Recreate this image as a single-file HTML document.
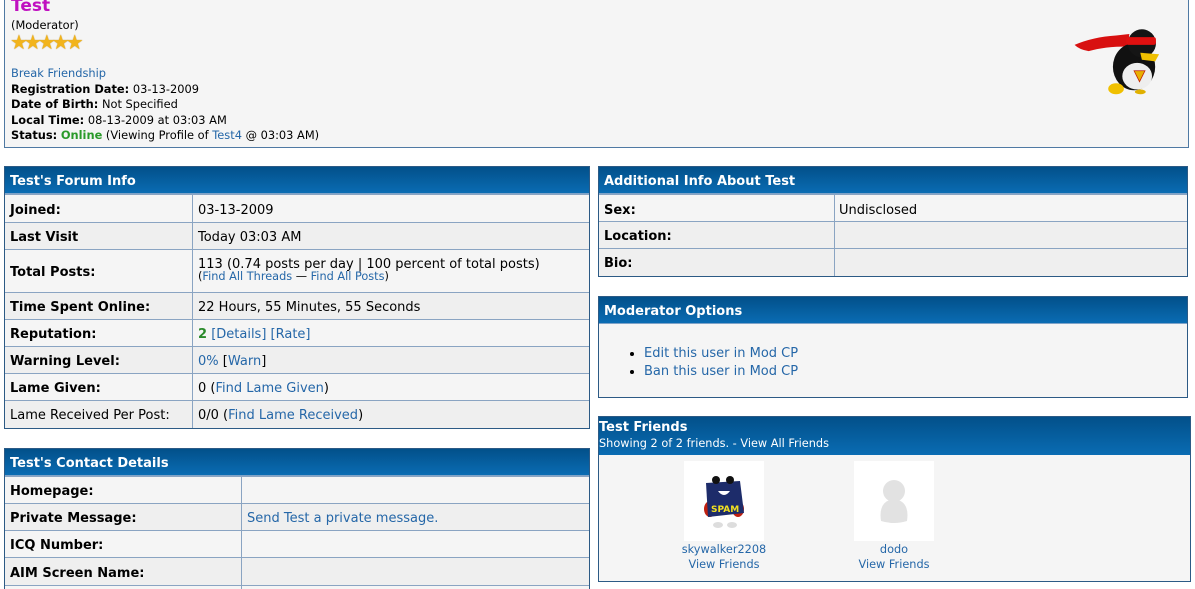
<!DOCTYPE html>
<html><head><meta charset="utf-8">
<style>
*{margin:0;padding:0;box-sizing:border-box}
html,body{width:1195px;height:589px;overflow:hidden}
body{background:#fff;font-family:"DejaVu Sans","Liberation Sans",sans-serif;color:#000;position:relative}
a{color:#2567a8;text-decoration:none}
.box{position:absolute;border:1px solid #2c5a85;background:#f5f5f5;overflow:hidden}
.hd{position:absolute;left:0;right:0;top:0;height:27px;background:linear-gradient(#02508a,#0a6cb3);color:#fff;font-weight:bold;font-size:13px;padding:7px 0 0 5px;border-bottom:1px solid #7fa3c8}
.row{position:absolute;left:0;right:0;border-top:1px solid #8aa4c2;font-size:13px}
.row.a{background:#f5f5f5}.row.b{background:#efefef}
.row .l{position:absolute;left:5px;font-weight:bold}
.row .v{position:absolute}
.div{position:absolute;top:27px;bottom:0;width:1px;background:#8aa4c2}
.top{font-size:11.4px;line-height:15.5px}
</style></head><body>

<div class="box" style="left:4px;top:-2px;width:1185px;height:150px;border-color:#4f79a3">
  <div style="position:absolute;left:6px;top:-3px;font-size:17px;font-weight:bold;color:#c010c0">Test</div>
  <div class="top" style="position:absolute;left:6px;top:19px">(Moderator)</div>
  <div style="position:absolute;left:5px;top:31px;font-size:20px;letter-spacing:-4px;color:#f2b41c;text-shadow:0 0 1px #b07a00">★★★★★</div>
  <div class="top" style="position:absolute;left:6px;top:67px">
    <a>Break Friendship</a><br>
    <b>Registration Date:</b> 03-13-2009<br>
    <b>Date of Birth:</b> Not Specified<br>
    <b>Local Time:</b> 08-13-2009 at 03:03 AM<br>
    <b>Status:</b> <b style="color:#2a9a2a">Online</b> (Viewing Profile of <a>Test4</a> @ 03:03 AM)
  </div>
  <svg style="position:absolute;left:1068px;top:20px" width="90" height="80" viewBox="0 0 115 100">
    <path d="M2 32 Q25 22 55 20 L72 18 L70 34 Q40 34 20 40 Q8 38 2 32Z" fill="#d81010"/>
    <ellipse cx="78" cy="60" rx="27" ry="30" fill="#111"/>
    <ellipse cx="82" cy="72" rx="19" ry="17" fill="#eee"/>
    <ellipse cx="88" cy="30" rx="18" ry="18" fill="#151515"/>
    <rect x="68" y="22" width="38" height="10" rx="3" fill="#e01010"/>
    <path d="M86 42 L110 44 L105 53 L88 51Z" fill="#f0c000"/>
    <path d="M78 65 L92 65 L85 79Z" fill="#e8b000" stroke="#c02000"/>
    <ellipse cx="55" cy="88" rx="10" ry="7" fill="#f0c000"/>
    <ellipse cx="86" cy="92" rx="7" ry="3" fill="#e0b000"/>
  </svg>
</div>

<!-- Forum info -->
<div class="box" style="left:4px;top:166px;width:586px;height:263px">
  <div class="hd">Test's Forum Info</div>
  <div class="row a" style="top:27px;height:28px"><span class="l" style="top:8px">Joined:</span><span class="v" style="left:193px;top:8px">03-13-2009</span></div>
  <div class="row b" style="top:55px;height:27px"><span class="l" style="top:7px">Last Visit</span><span class="v" style="left:193px;top:7px">Today 03:03 AM</span></div>
  <div class="row a" style="top:82px;height:43px"><span class="l" style="top:15px">Total Posts:</span><span class="v" style="left:193px;top:7px;white-space:nowrap">113 (0.74 posts per day | 100 percent of total posts)<br><span style="font-size:11.3px;position:relative;top:-3px">(<a>Find All Threads</a> — <a>Find All Posts</a>)</span></span></div>
  <div class="row b" style="top:125px;height:27px"><span class="l" style="top:7px">Time Spent Online:</span><span class="v" style="left:193px;top:7px">22 Hours, 55 Minutes, 55 Seconds</span></div>
  <div class="row a" style="top:152px;height:27px"><span class="l" style="top:7px">Reputation:</span><span class="v" style="left:193px;top:7px"><b style="color:#2a8a2a">2</b> <a>[Details]</a> <a>[Rate]</a></span></div>
  <div class="row b" style="top:179px;height:27px"><span class="l" style="top:7px">Warning Level:</span><span class="v" style="left:193px;top:7px"><a>0%</a> [<a>Warn</a>]</span></div>
  <div class="row a" style="top:206px;height:27px"><span class="l" style="top:7px">Lame Given:</span><span class="v" style="left:193px;top:7px">0 (<a>Find Lame Given</a>)</span></div>
  <div class="row b" style="top:233px;height:28px"><span class="l" style="top:7px;font-weight:normal">Lame Received Per Post:</span><span class="v" style="left:193px;top:7px">0/0 (<a>Find Lame Received</a>)</span></div>
  <div class="div" style="left:187px"></div>
</div>

<!-- Contact -->
<div class="box" style="left:4px;top:448px;width:586px;height:150px">
  <div class="hd">Test's Contact Details</div>
  <div class="row a" style="top:27px;height:27px"><span class="l" style="top:7px">Homepage:</span></div>
  <div class="row b" style="top:54px;height:27px"><span class="l" style="top:7px">Private Message:</span><span class="v" style="left:242px;top:7px"><a>Send Test a private message.</a></span></div>
  <div class="row a" style="top:81px;height:27px"><span class="l" style="top:7px">ICQ Number:</span></div>
  <div class="row b" style="top:108px;height:28px"><span class="l" style="top:8px">AIM Screen Name:</span></div>
  <div class="row a" style="top:136px;height:20px"></div>
  <div class="div" style="left:236px"></div>
</div>

<!-- Additional info -->
<div class="box" style="left:598px;top:166px;width:590px;height:111px">
  <div class="hd">Additional Info About Test</div>
  <div class="row a" style="top:27px;height:27px"><span class="l" style="top:8px">Sex:</span><span class="v" style="left:240px;top:8px">Undisclosed</span></div>
  <div class="row b" style="top:54px;height:27px"><span class="l" style="top:7px">Location:</span></div>
  <div class="row b" style="top:81px;height:28px"><span class="l" style="top:7px">Bio:</span></div>
  <div class="div" style="left:235px"></div>
</div>

<!-- Moderator -->
<div class="box" style="left:598px;top:296px;width:590px;height:102px">
  <div class="hd">Moderator Options</div>
  <ul style="position:absolute;left:45px;top:48px;font-size:13px;line-height:18px;list-style:disc">
    <li><a>Edit this user in Mod CP</a></li>
    <li><a>Ban this user in Mod CP</a></li>
  </ul>
</div>

<!-- Friends -->
<div class="box" style="left:598px;top:416px;width:593px;height:166px">
  <div style="position:absolute;left:0;right:0;top:0;height:38px;background:linear-gradient(#02508a,#0a6cb3);color:#fff">
    <div style="position:absolute;left:0;top:3px;font-size:13px;font-weight:bold">Test Friends</div>
    <div style="position:absolute;left:0;top:20px;font-size:11.3px">Showing 2 of 2 friends. - View All Friends</div>
  </div>
  <div style="position:absolute;left:85px;top:44px;width:80px;height:80px;background:#fff">
    <svg width="80" height="80" viewBox="0 0 80 80">
      <ellipse cx="26" cy="48" rx="6" ry="8" fill="#c02010"/><ellipse cx="54" cy="48" rx="6" ry="8" fill="#c02010"/>
      <path d="M22 22 L56 20 L60 52 L24 56Z" fill="#1d2c6a"/>
      <circle cx="32" cy="19" r="4" fill="#111"/><circle cx="46" cy="19" r="4" fill="#111"/>
      <path d="M34 30 Q40 38 46 30Z" fill="#fff"/>
      <text x="27" y="51" font-size="9" font-weight="bold" fill="#f0e020" font-family="DejaVu Sans">SPAM</text>
      <ellipse cx="34" cy="64" rx="5" ry="3" fill="#ddd"/><ellipse cx="48" cy="64" rx="5" ry="3" fill="#ddd"/>
    </svg>
  </div>
  <div style="position:absolute;left:255px;top:44px;width:80px;height:80px;background:#fff">
    <svg width="80" height="80" viewBox="0 0 80 80">
      <circle cx="40" cy="30" r="11" fill="#e2e2e2"/>
      <path d="M27 60 Q24 40 40 38 Q56 40 53 60 Q40 64 27 60Z" fill="#e2e2e2"/>
    </svg>
  </div>
  <div style="position:absolute;left:65px;width:120px;top:125px;text-align:center;font-size:11.3px;line-height:15px"><a>skywalker2208</a><br><a>View Friends</a></div>
  <div style="position:absolute;left:235px;width:120px;top:125px;text-align:center;font-size:11.3px;line-height:15px"><a>dodo</a><br><a>View Friends</a></div>
</div>

</body></html>
